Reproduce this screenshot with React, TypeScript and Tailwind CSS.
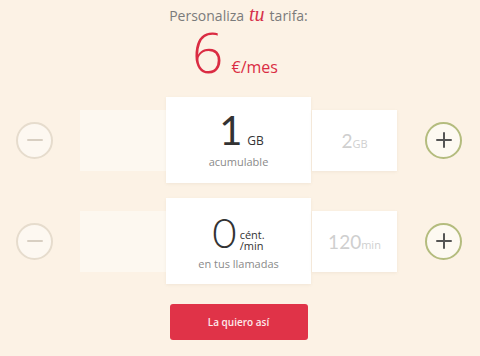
import React from "react";

const sans = "font-['Open_Sans',sans-serif]";
const digits = "font-['Lato',sans-serif]";

function RoundButton({ kind }: { kind: "minus" | "plus" }) {
  const plus = kind === "plus";
  return (
    <button
      className={
        "h-[37px] w-[37px] shrink-0 rounded-full flex items-center justify-center border-2 " +
        (plus ? "border-[#b4bc7e] bg-[#fdf9f1]" : "border-[#e6dccd] bg-[#fdf8f1]")
      }
    >
      <svg width="16" height="16" viewBox="0 0 16 16">
        <path d="M1 8h14" stroke={plus ? "#555555" : "#d8cfc2"} strokeWidth="2" strokeLinecap="round" />
        {plus && <path d="M8 1v14" stroke="#555555" strokeWidth="2" strokeLinecap="round" />}
      </svg>
    </button>
  );
}

function Row({ center, side }: { center: React.ReactNode; side: React.ReactNode }) {
  return (
    <div className="flex items-center w-[445px]">
      <RoundButton kind="minus" />
      <div className="ml-[27px] flex items-center">
        {/* previous option, faded */}
        <div className="h-[61px] w-[86px] bg-[#fdf8f0]" />
        <div className="h-[86px] w-[145px] bg-white shadow-[0_1px_3px_rgba(120,90,50,0.08)] flex flex-col items-center pt-[13px]">
          {center}
        </div>
        {/* next option */}
        <div className="ml-[1px] h-[61px] w-[85px] bg-white shadow-[0_1px_3px_rgba(120,90,50,0.08)] flex items-center justify-center text-[#cfcfcf]">
          {side}
        </div>
      </div>
      <div className="ml-[28px]">
        <RoundButton kind="plus" />
      </div>
    </div>
  );
}

export default function App() {
  return (
    <div className={`min-h-screen w-full bg-[#fcf2e5] ${sans}`}>
      <div className="w-[477px] flex flex-col items-center pt-[4px]">
        {/* Heading */}
        <h1 className="flex items-baseline text-[14px] leading-[20px] text-[#7b7b7b] font-normal">
          <span>Personaliza</span>
          <span className="mx-[5px] font-['Liberation_Serif',serif] italic text-[20px] text-[#d6304a] leading-[20px]">tu</span>
          <span>tarifa:</span>
        </h1>

        {/* Price */}
        <div className="flex items-baseline gap-[8px] mr-[7px] -mt-[2px] text-[#da2c43]">
          <span className="text-[55px] leading-none font-light">6</span>
          <span className="text-[16px] leading-none">€/mes</span>
        </div>

        {/* Data */}
        <div className="mt-[18px]">
          <Row
            center={
              <>
                <div className="flex items-baseline text-[#333] pl-[6px]">
                  <span className={`${digits} text-[40px] leading-none font-normal`}>1</span>
                  <span className="ml-[5px] text-[12px] leading-none">GB</span>
                </div>
                <div className="mt-[4px] text-[11px] leading-[16px] text-[#8a8a8a]">acumulable</div>
              </>
            }
            side={
              <div className="flex items-baseline">
                <span className={`${digits} text-[19px] leading-none`}>2</span>
                <span className="text-[11px] leading-none">GB</span>
              </div>
            }
          />
        </div>

        {/* Calls */}
        <div className="mt-[15px]">
          <Row
            center={
              <>
                <div className="flex items-end text-[#333]">
                  <span className={`${digits} text-[42px] leading-none font-light`}>0</span>
                  <span className="ml-[3px] mb-[2px] flex flex-col text-[11px] leading-[11px]">
                    <span className="block h-[11px]">cént.</span>
                    <span className="block h-[11px]">/min</span>
                  </span>
                </div>
                <div className="mt-[3px] text-[11px] leading-[16px] text-[#8a8a8a]">en tus llamadas</div>
              </>
            }
            side={
              <div className="flex items-baseline">
                <span className={`${digits} text-[19px] leading-none`}>120</span>
                <span className="text-[11px] leading-none">min</span>
              </div>
            }
          />
        </div>

        {/* CTA */}
        <button className="mt-[20px] h-[36px] w-[138px] rounded-[3px] bg-[#e03348] text-[10px] font-semibold text-[#fde9eb]">
          La quiero así
        </button>
      </div>
    </div>
  );
}
